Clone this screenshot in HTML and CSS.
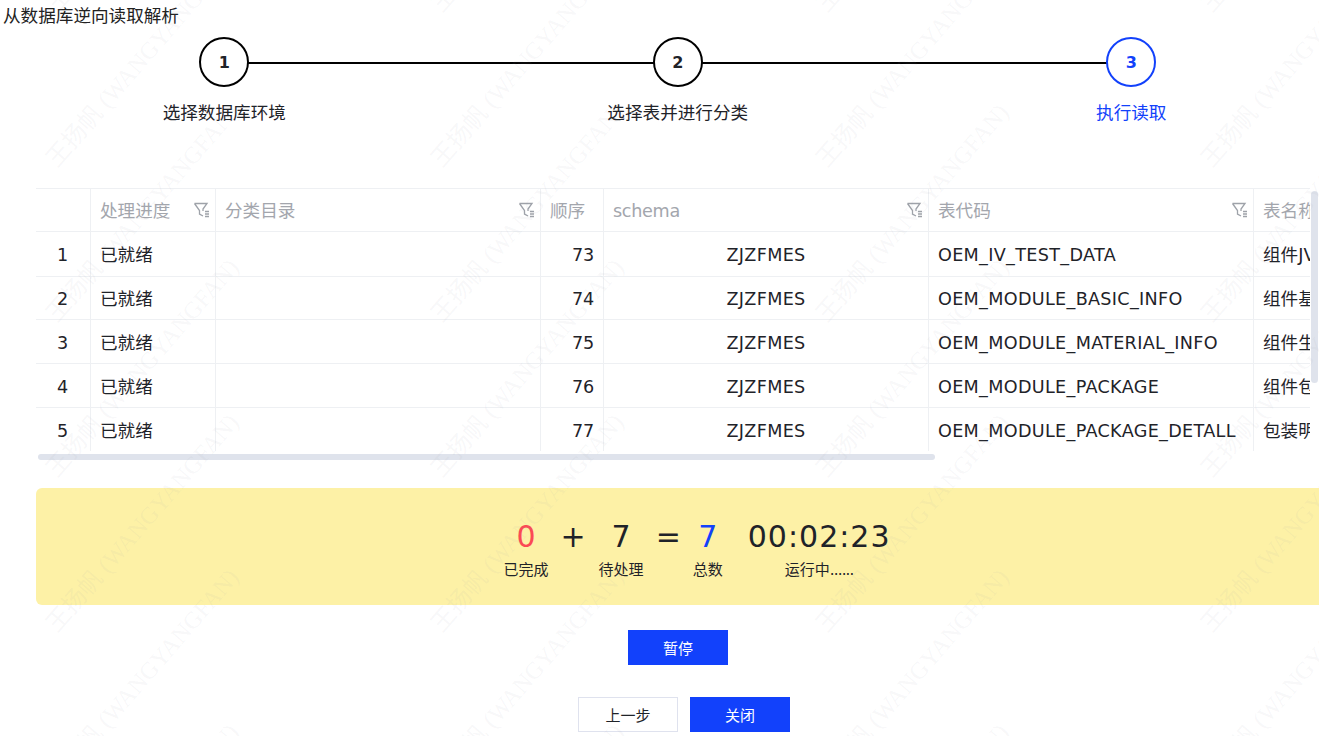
FILE: index.html
```html
<!DOCTYPE html>
<html lang="zh-CN">
<head>
<meta charset="utf-8">
<title>从数据库逆向读取解析</title>
<link rel="stylesheet" href="styles.css">
</head>
<body>
<div class="page">
  <h1 class="title">从数据库逆向读取解析</h1>

  <ol class="steps">
    <li class="step done"><span class="dot">1</span><span class="step-label">选择数据库环境</span></li>
    <li class="step done"><span class="dot">2</span><span class="step-label">选择表并进行分类</span></li>
    <li class="step active"><span class="dot">3</span><span class="step-label">执行读取</span></li>
  </ol>

  <div class="table-wrap">
    <div class="table">
      <div class="th"></div>
      <div class="th">处理进度<svg class="filter" viewBox="0 0 17 16"><path d="M1.5 1.5H14L10 7v2M1.5 1.5l5 7V12l3.5 2"/><path d="M12 9.5h4M12 12h4M12 14.5h4"/></svg></div>
      <div class="th">分类目录<svg class="filter" viewBox="0 0 17 16"><path d="M1.5 1.5H14L10 7v2M1.5 1.5l5 7V12l3.5 2"/><path d="M12 9.5h4M12 12h4M12 14.5h4"/></svg></div>
      <div class="th">顺序</div>
      <div class="th"><span class="schema">schema</span><svg class="filter" viewBox="0 0 17 16"><path d="M1.5 1.5H14L10 7v2M1.5 1.5l5 7V12l3.5 2"/><path d="M12 9.5h4M12 12h4M12 14.5h4"/></svg></div>
      <div class="th">表代码<svg class="filter" viewBox="0 0 17 16"><path d="M1.5 1.5H14L10 7v2M1.5 1.5l5 7V12l3.5 2"/><path d="M12 9.5h4M12 12h4M12 14.5h4"/></svg></div>
      <div class="th">表名称</div>

      <div class="td index latin">1</div><div class="td">已就绪</div><div class="td"></div><div class="td right latin">73</div><div class="td center latin caps">ZJZFMES</div><div class="td latin caps">OEM_IV_TEST_DATA</div><div class="td">组件JV测试数据</div>
      <div class="td index latin">2</div><div class="td">已就绪</div><div class="td"></div><div class="td right latin">74</div><div class="td center latin caps">ZJZFMES</div><div class="td latin caps">OEM_MODULE_BASIC_INFO</div><div class="td">组件基本信息</div>
      <div class="td index latin">3</div><div class="td">已就绪</div><div class="td"></div><div class="td right latin">75</div><div class="td center latin caps">ZJZFMES</div><div class="td latin caps">OEM_MODULE_MATERIAL_INFO</div><div class="td">组件生产物料</div>
      <div class="td index latin">4</div><div class="td">已就绪</div><div class="td"></div><div class="td right latin">76</div><div class="td center latin caps">ZJZFMES</div><div class="td latin caps">OEM_MODULE_PACKAGE</div><div class="td">组件包装信息</div>
      <div class="td index latin last">5</div><div class="td last">已就绪</div><div class="td last"></div><div class="td right latin last">77</div><div class="td center latin caps last">ZJZFMES</div><div class="td latin caps last">OEM_MODULE_PACKAGE_DETALL</div><div class="td last">包装明细信息</div>
    </div>
    <div class="scroll-v"></div>
    <div class="scroll-h"></div>
  </div>

  <section class="stats">
    <div class="stat"><span class="num red">0</span><span class="cap">已完成</span></div>
    <div class="stat op"><span class="num">+</span></div>
    <div class="stat"><span class="num">7</span><span class="cap">待处理</span></div>
    <div class="stat op"><span class="num">=</span></div>
    <div class="stat total"><span class="num blue">7</span><span class="cap">总数</span></div>
    <div class="stat timer"><span class="num">00:02:23</span><span class="cap">运行中<span class="dots">......</span></span></div>
  </section>

  <div class="pause-row"><button class="btn primary">暂停</button></div>
  <div class="nav-row"><button class="btn">上一步</button><button class="btn primary">关闭</button></div>
</div>

<div class="watermark" aria-hidden="true">
  <span>王扬帆 (WANGYANGFAN)</span><span>王扬帆 (WANGYANGFAN)</span><span>王扬帆 (WANGYANGFAN)</span><span>王扬帆 (WANGYANGFAN)</span>
  <span>王扬帆 (WANGYANGFAN)</span><span>王扬帆 (WANGYANGFAN)</span><span>王扬帆 (WANGYANGFAN)</span><span>王扬帆 (WANGYANGFAN)</span>
  <span>王扬帆 (WANGYANGFAN)</span><span>王扬帆 (WANGYANGFAN)</span><span>王扬帆 (WANGYANGFAN)</span><span>王扬帆 (WANGYANGFAN)</span>
  <span>王扬帆 (WANGYANGFAN)</span><span>王扬帆 (WANGYANGFAN)</span><span>王扬帆 (WANGYANGFAN)</span><span>王扬帆 (WANGYANGFAN)</span>
  <span>王扬帆 (WANGYANGFAN)</span><span>王扬帆 (WANGYANGFAN)</span><span>王扬帆 (WANGYANGFAN)</span><span>王扬帆 (WANGYANGFAN)</span>
  <span>王扬帆 (WANGYANGFAN)</span><span>王扬帆 (WANGYANGFAN)</span><span>王扬帆 (WANGYANGFAN)</span><span>王扬帆 (WANGYANGFAN)</span>
  <span>王扬帆 (WANGYANGFAN)</span><span>王扬帆 (WANGYANGFAN)</span><span>王扬帆 (WANGYANGFAN)</span><span>王扬帆 (WANGYANGFAN)</span>
</div>
</body>
</html>
```
FILE: styles.css
```css
html, body { margin: 0; height: 100%; overflow: hidden; background: #fff; }
body {
  position: relative;
  font-family: "DejaVu Sans", "Noto Sans CJK SC", sans-serif;
  font-size: 17.6px;
  color: #1f2329;
}
.page { width: 1319px; height: 736px; overflow: hidden; }

.title {
  margin: 0;
  padding: 4px 0 0 3px;
  font-size: 17.6px;
  font-weight: 400;
  line-height: 25px;
  color: #222;
}

.steps {
  display: grid;
  grid-template-columns: repeat(3, 453.5px);
  margin: 8px 0 0 -2.5px;
  padding: 0;
  list-style: none;
}
.step {
  position: relative;
  display: flex;
  flex-direction: column;
  align-items: center;
}
.step:not(:last-child)::after {
  content: "";
  position: absolute;
  left: 50%;
  top: 24.5px;
  width: 100%;
  height: 2px;
  background: #000;
}
.dot {
  position: relative;
  z-index: 1;
  box-sizing: border-box;
  width: 50px;
  height: 50px;
  display: flex;
  align-items: center;
  justify-content: center;
  border: 2px solid #000;
  border-radius: 50%;
  background: #fff;
  font-size: 16px;
  font-weight: 700;
}
.step-label {
  margin-top: 13px;
  line-height: 26px;
  color: #1f2329;
  white-space: nowrap;
}
.active .dot { border-color: #1241fb; color: #1241fb; }
.active .step-label { color: #1241fb; }

.table-wrap {
  position: relative;
  width: 1283px;
  margin: 62px 0 0 36px;
  height: 278px;
}
.table {
  display: grid;
  grid-template-columns: 55px 125px 325px 63px 325px 325px 325px;
  grid-template-rows: 43px 45px 43px 44px 44px 43px;
  width: 1274px;
  overflow: hidden;
  border-top: 1px solid #eef0f3;
  box-sizing: border-box;
}
.th, .td {
  box-sizing: border-box;
  position: relative;
  display: flex;
  align-items: center;
  padding: 0 9px 1px 9px;
  border-right: 1px solid #eef0f3;
  border-bottom: 1px solid #eef0f3;
  white-space: nowrap;
  min-width: 0;
  overflow: hidden;
}
.th { color: #a3a6ad; justify-content: space-between; padding-right: 5px; }
.schema { padding-top: 2px; letter-spacing: -0.3px; }
.td.latin { padding-top: 2px; padding-bottom: 0; }
.td.caps { letter-spacing: 0.32px; }
.td.index { justify-content: center; padding-right: 10px; }
.td.center { justify-content: center; }
.td.right { justify-content: flex-end; letter-spacing: -0.2px; }
.td.last { border-bottom: 0; }
.filter {
  flex: none;
  width: 17px;
  height: 16px;
  fill: none;
  stroke: #9ea2a9;
  stroke-width: 1.3;
}

.scroll-v {
  position: absolute;
  left: 1275px;
  top: 3px;
  width: 7px;
  height: 192px;
  border-radius: 4px;
  background: #dfe3ec;
}
.scroll-h {
  position: absolute;
  left: 2px;
  top: 266px;
  width: 897px;
  height: 6px;
  border-radius: 3px;
  background: #dfe3ec;
}

.stats {
  box-sizing: border-box;
  display: flex;
  justify-content: center;
  gap: 13px;
  width: 1322px;
  height: 117px;
  margin: 22px 0 0 36px;
  padding-top: 29px;
  border-radius: 6px;
  background: #fdf1a6;
}
.stat { display: flex; flex-direction: column; align-items: center; }
.op { margin-left: -1px; }
.total { margin-left: -1px; }
.timer { margin-left: 12px; }
.timer .num { letter-spacing: 1px; }
.dots { letter-spacing: -0.8px; }
.num { font-size: 30px; line-height: 40px; color: #1f2329; }
.num.red { color: #fb4a54; }
.num.blue { color: #1241fb; }
.cap { margin-top: 3px; font-size: 15px; line-height: 20px; }

.pause-row { display: flex; justify-content: center; margin: 25px 0 0 37px; }
.nav-row { display: flex; justify-content: center; gap: 12px; margin: 32px 0 0 49px; }
.btn {
  box-sizing: border-box;
  width: 100px;
  height: 35px;
  padding: 0;
  border: 1px solid #dfe2ee;
  background: #fff;
  color: #1f2329;
  font: inherit;
  font-size: 15px;
}
.btn.primary { border-color: #1241fb; background: #1241fb; color: #fff; }

.watermark {
  position: absolute;
  inset: -8px 0 0 0;
  overflow: hidden;
  pointer-events: none;
  display: grid;
  grid-template-columns: repeat(4, 385px);
  grid-auto-rows: 155px;
  padding-left: 60px;
  font-family: "Liberation Serif", "Noto Sans CJK SC", serif;
  font-size: 24px;
  line-height: 1;
  color: rgba(150, 155, 170, 0.08);
}
.watermark span {
  white-space: nowrap;
  transform-origin: 0 100%;
  transform: rotate(-49deg);
  align-self: start;
  justify-self: start;
}
```
